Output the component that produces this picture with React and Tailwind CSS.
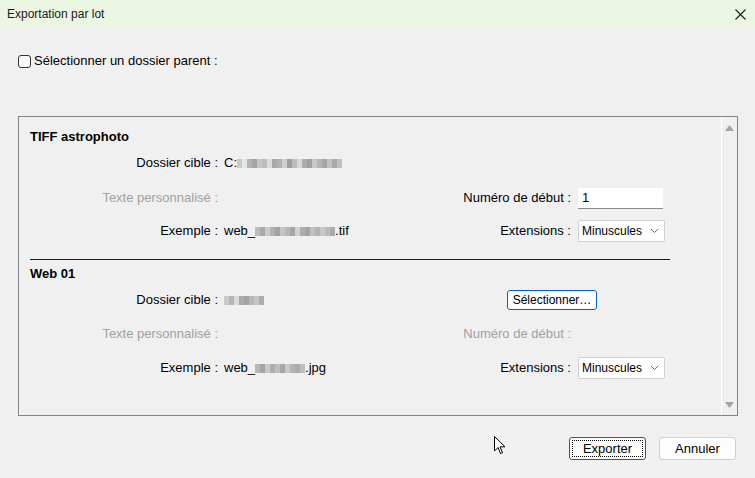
import React from "react";

const F = { fontFamily: '"Liberation Sans", Arial, sans-serif' };

function Blur({ cells }) {
  return (
    <span className="inline-flex h-[9px] items-stretch align-middle">
      {cells.map((c, i) => (
        <span key={i} className="w-[5px] h-full" style={{ background: c }} />
      ))}
    </span>
  );
}

const g1 = ["#c9c9c9", "#e6e6e6", "#b3b3b3", "#a3a3a3", "#c5c5c5", "#bcbcbc", "#dcdcdc", "#a8a8a8", "#b2b2b2", "#cfcfcf", "#9f9f9f", "#bdbdbd", "#d8d8d8", "#adadad", "#a1a1a1", "#c8c8c8", "#b4b4b4", "#a6a6a6", "#c3c3c3", "#aaaaaa", "#bfbfbf"];
const g2 = ["#bdbdbd", "#a8a8a8", "#cbcbcb", "#b1b1b1", "#a2a2a2", "#c4c4c4", "#b7b7b7", "#a6a6a6", "#d0d0d0", "#aeaeae", "#a4a4a4", "#c0c0c0", "#b3b3b3", "#c7c7c7", "#bbbbbb", "#aaaaaa"];
const g3 = ["#cbcbcb", "#b5b5b5", "#dcdcdc", "#aaaaaa", "#a3a3a3", "#b8b8b8", "#c5c5c5", "#adadad"];
const g4 = ["#b8b8b8", "#a5a5a5", "#c9c9c9", "#aeaeae", "#bfbfbf", "#a6a6a6", "#c9c9c9", "#b5b5b5", "#ababab", "#bdbdbd"];

function Select() {
  return (
    <div className="ml-[7px] w-[87px] h-[22px] bg-white border border-[#cfcfcf] rounded-[2px] flex items-center pl-[3px] pr-[5px] text-[12px] text-black">
      <span className="flex-1">Minuscules</span>
      <svg width="9" height="6" viewBox="0 0 9 6">
        <path d="M1 1 L4.5 4.5 L8 1" fill="none" stroke="#6b6b6b" strokeWidth="1" />
      </svg>
    </div>
  );
}

function Row({ className = "", left, leftGray, value, right, rightGray, control }) {
  return (
    <div className={"flex items-center h-[22px] text-[13px] " + className}>
      <div className={"w-[188px] text-right " + (leftGray ? "text-[#a0a0a0]" : "text-black")}>{left}</div>
      <div className="ml-[6px] w-[176px] text-black flex items-center whitespace-nowrap">{value}</div>
      {right !== undefined ? (
        <div className={"w-[171px] text-right " + (rightGray ? "text-[#a0a0a0]" : "text-black")}>{right}</div>
      ) : null}
      {control}
    </div>
  );
}

export default function App() {
  return (
    <div className="relative w-[755px] h-[478px] bg-[#f0f0f0] flex flex-col overflow-hidden" style={F}>
      {/* Title bar */}
      <div className="h-[28px] bg-[#eaf6e2] flex items-center pl-[7px] pr-[8px] text-[12px] text-[#1a1a1a]">
        <span className="flex-1">Exportation par lot</span>
        <svg width="11" height="11" viewBox="0 0 11 11" className="mr-[1px]">
          <path d="M0.5 0.5 L10.5 10.5 M10.5 0.5 L0.5 10.5" stroke="#1a1a1a" strokeWidth="1.1" />
        </svg>
      </div>

      {/* Checkbox */}
      <div className="mt-[26px] ml-[18px] flex items-center h-[14px] text-[13px] text-black">
        <span className="w-[13px] h-[13px] border border-[#333] rounded-[3px] bg-[#f7f7f7]" />
        <span className="ml-[3px]">Sélectionner un dossier parent :</span>
      </div>

      {/* Panel */}
      <div className="mt-[48px] ml-[18px] w-[720px] h-[300px] border border-[#848484] flex">
        <div className="flex-1 pl-[11px] pt-[12px] flex flex-col">
          <div className="h-[15px] leading-[15px] text-[13px] font-bold text-black">TIFF astrophoto</div>
          <Row
            className="mt-[8px]"
            left="Dossier cible :"
            value={<><span>C:</span><Blur cells={g1} /></>}
          />
          <Row
            className="mt-[13px]"
            left="Texte personnalisé :"
            leftGray
            value={null}
            right="Numéro de début :"
            control={
              <div className="ml-[7px] w-[85px] h-[21px] bg-white border-b border-[#8a8a8a] flex items-center pl-[4px] text-[13px] text-black">1</div>
            }
          />
          <Row
            className="mt-[11px]"
            left="Exemple :"
            value={<><span>web_</span><Blur cells={g2} /><span>.tif</span></>}
            right="Extensions :"
            control={<Select />}
          />
          <div className="mt-[17px] w-[640px] h-px bg-[#1a1a1a]" />
          <div className="mt-[6px] h-[15px] leading-[15px] text-[13px] font-bold text-black">Web 01</div>
          <div className="mt-[8px] flex items-center h-[22px] text-[13px]">
            <div className="w-[188px] text-right text-black">Dossier cible :</div>
            <div className="ml-[6px] w-[176px] flex items-center"><Blur cells={g3} /></div>
            <div className="ml-[107px] w-[90px] h-[20px] bg-[#fdfdfd] border border-[#0067c0] rounded-[3px] flex items-center justify-center text-[12px] text-black">Sélectionner…</div>
          </div>
          <Row
            className="mt-[12px]"
            left="Texte personnalisé :"
            leftGray
            value={null}
            right="Numéro de début :"
            rightGray
          />
          <Row
            className="mt-[12px]"
            left="Exemple :"
            value={<><span>web_</span><Blur cells={g4} /><span>.jpg</span></>}
            right="Extensions :"
            control={<Select />}
          />
        </div>
        {/* Scrollbar */}
        <div className="w-[16px] border-l border-white flex flex-col items-center justify-between pt-[8px] pb-[7px]">
          <svg width="9" height="6" viewBox="0 0 9 6"><path d="M4.5 0 L9 6 L0 6 Z" fill="#a3a3a3" /></svg>
          <svg width="9" height="6" viewBox="0 0 9 6"><path d="M0 0 L9 0 L4.5 6 Z" fill="#a3a3a3" /></svg>
        </div>
      </div>

      {/* Buttons */}
      <div className="mt-[21px] flex justify-end pr-[19px] gap-[13px]">
        <div className="w-[77px] h-[23px] bg-[#fdfdfd] border border-[#0067c0] rounded-[3px] p-[2px]">
          <div className="w-full h-full border border-dotted border-black flex items-center justify-center text-[13px] text-black">Exporter</div>
        </div>
        <div className="w-[77px] h-[23px] bg-[#fdfdfd] border border-[#d0d0d0] rounded-[3px] flex items-center justify-center text-[13px] text-black">Annuler</div>
      </div>

      {/* Mouse cursor */}
      <svg className="absolute left-[494px] top-[436px]" width="13" height="20" viewBox="0 0 13 20">
        <path d="M0.5 0.5 L0.5 15 L4 11.5 L6.5 17.5 L8.5 16.7 L6 10.8 L11 10.8 Z" fill="#ffffff" stroke="#000" strokeWidth="1" strokeLinejoin="round" />
      </svg>
    </div>
  );
}
